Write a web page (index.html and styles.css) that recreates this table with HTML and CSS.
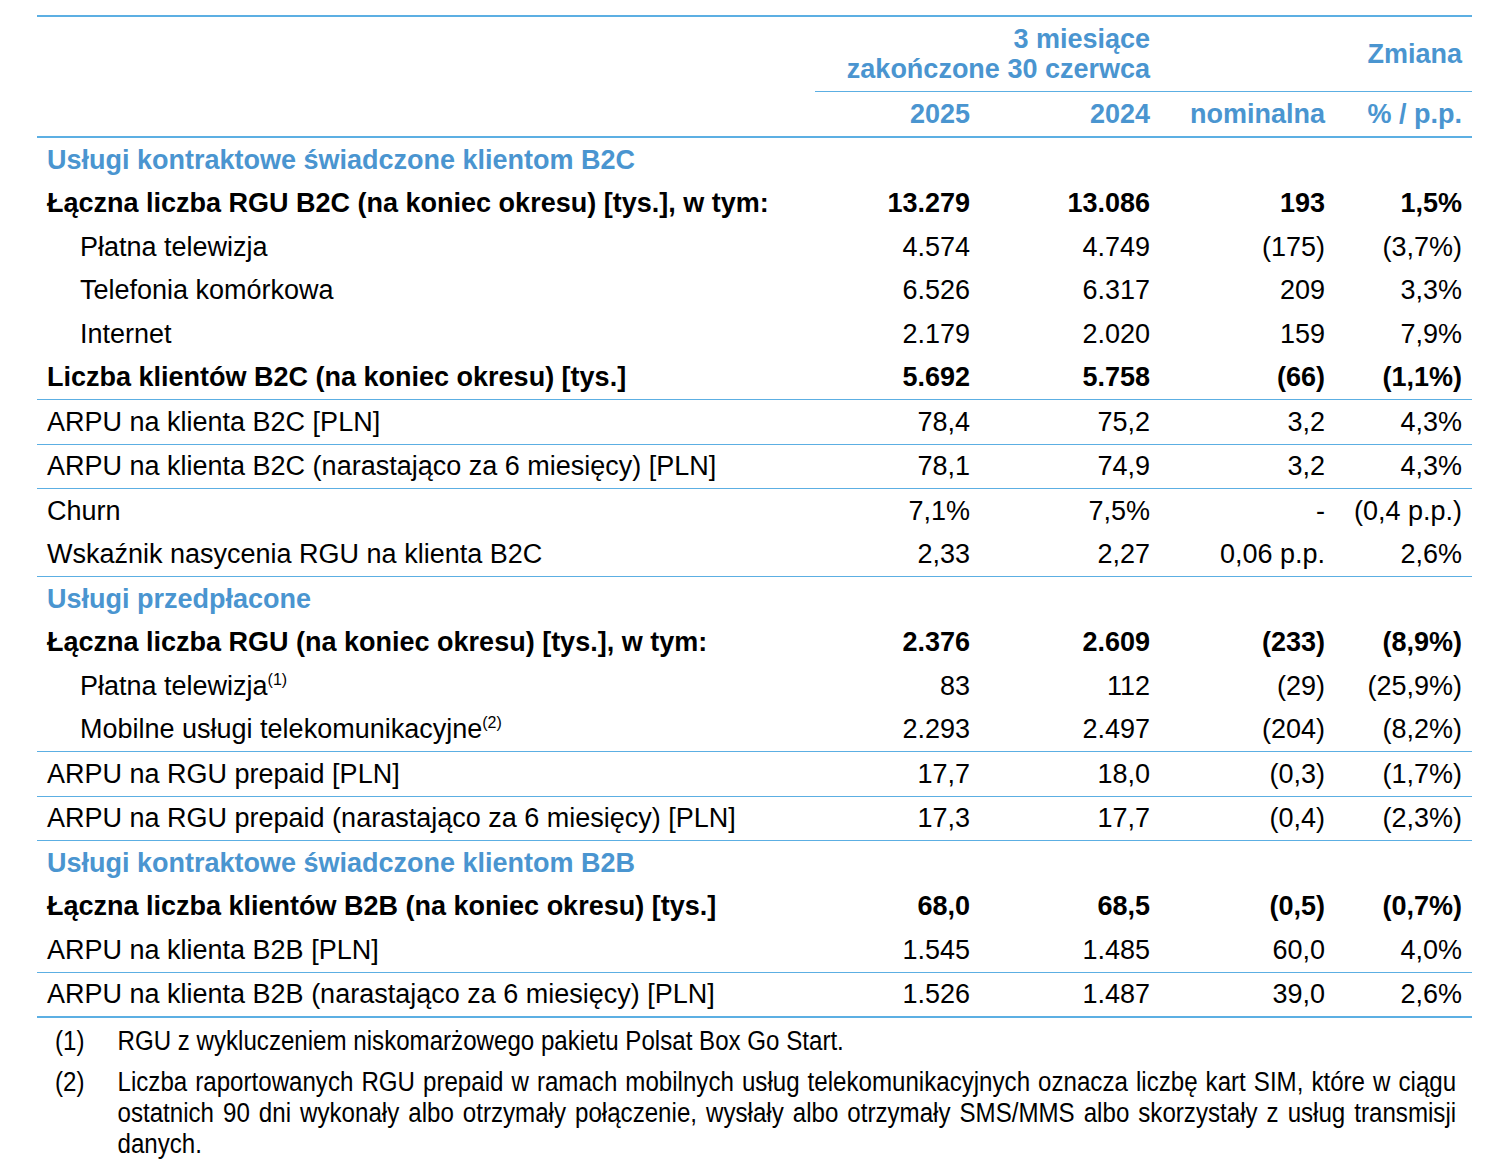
FILE: index.html
```html
<!DOCTYPE html>
<html lang="pl">
<head>
<meta charset="utf-8">
<title>KPI</title>
<link rel="stylesheet" href="styles.css">
</head>
<body>
<div class="page">
<table class="kpi">
  <colgroup>
    <col class="c-label"><col class="c-y1"><col class="c-y2"><col class="c-nom"><col class="c-pct">
  </colgroup>
  <thead>
    <tr class="h1">
      <th class="lbl" rowspan="2"></th>
      <th class="hd span" colspan="2">3 miesiące<br>zakończone 30 czerwca</th>
      <th class="hd"></th>
      <th class="hd">Zmiana</th>
    </tr>
    <tr class="h2">
      <th class="hd">2025</th>
      <th class="hd">2024</th>
      <th class="hd">nominalna</th>
      <th class="hd">% / p.p.</th>
    </tr>
  </thead>
  <tbody>
    <tr class="sec"><td colspan="5">Usługi kontraktowe świadczone klientom B2C</td></tr>
    <tr class="b"><td>Łączna liczba RGU B2C (na koniec okresu) [tys.], w tym:</td><td>13.279</td><td>13.086</td><td>193</td><td>1,5%</td></tr>
    <tr class="ind"><td>Płatna telewizja</td><td>4.574</td><td>4.749</td><td>(175)</td><td>(3,7%)</td></tr>
    <tr class="ind"><td>Telefonia komórkowa</td><td>6.526</td><td>6.317</td><td>209</td><td>3,3%</td></tr>
    <tr class="ind"><td>Internet</td><td>2.179</td><td>2.020</td><td>159</td><td>7,9%</td></tr>
    <tr class="b"><td>Liczba klientów B2C (na koniec okresu) [tys.]</td><td>5.692</td><td>5.758</td><td>(66)</td><td>(1,1%)</td></tr>
    <tr class="ln"><td>ARPU na klienta B2C [PLN]</td><td>78,4</td><td>75,2</td><td>3,2</td><td>4,3%</td></tr>
    <tr class="ln"><td>ARPU na klienta B2C (narastająco za 6 miesięcy) [PLN]</td><td>78,1</td><td>74,9</td><td>3,2</td><td>4,3%</td></tr>
    <tr class="ln"><td>Churn</td><td>7,1%</td><td>7,5%</td><td>-</td><td>(0,4 p.p.)</td></tr>
    <tr><td>Wskaźnik nasycenia RGU na klienta B2C</td><td>2,33</td><td>2,27</td><td>0,06 p.p.</td><td>2,6%</td></tr>
    <tr class="sec ln"><td colspan="5">Usługi przedpłacone</td></tr>
    <tr class="b"><td>Łączna liczba RGU (na koniec okresu) [tys.], w tym:</td><td>2.376</td><td>2.609</td><td>(233)</td><td>(8,9%)</td></tr>
    <tr class="ind"><td>Płatna telewizja<sup>(1)</sup></td><td>83</td><td>112</td><td>(29)</td><td>(25,9%)</td></tr>
    <tr class="ind"><td>Mobilne usługi telekomunikacyjne<sup>(2)</sup></td><td>2.293</td><td>2.497</td><td>(204)</td><td>(8,2%)</td></tr>
    <tr class="ln"><td>ARPU na RGU prepaid&nbsp;[PLN]</td><td>17,7</td><td>18,0</td><td>(0,3)</td><td>(1,7%)</td></tr>
    <tr class="ln"><td>ARPU na RGU prepaid (narastająco za 6 miesięcy) [PLN]</td><td>17,3</td><td>17,7</td><td>(0,4)</td><td>(2,3%)</td></tr>
    <tr class="sec ln"><td colspan="5">Usługi kontraktowe świadczone klientom B2B</td></tr>
    <tr class="b"><td>Łączna liczba klientów B2B (na koniec okresu) [tys.]</td><td>68,0</td><td>68,5</td><td>(0,5)</td><td>(0,7%)</td></tr>
    <tr><td>ARPU na klienta B2B [PLN]</td><td>1.545</td><td>1.485</td><td>60,0</td><td>4,0%</td></tr>
    <tr class="ln last"><td>ARPU na klienta B2B (narastająco za 6 miesięcy) [PLN]</td><td>1.526</td><td>1.487</td><td>39,0</td><td>2,6%</td></tr>
  </tbody>
</table>
<div class="notes-wrap">
  <div class="notes">
    <div class="note"><span class="num">(1)</span><p>RGU z wykluczeniem niskomarżowego pakietu Polsat Box Go Start.</p></div>
    <div class="note"><span class="num">(2)</span><p>Liczba raportowanych RGU prepaid w ramach mobilnych usług telekomunikacyjnych oznacza liczbę kart SIM, które w ciągu ostatnich 90 dni wykonały albo otrzymały połączenie, wysłały albo otrzymały SMS/MMS albo skorzystały z usług transmisji danych.</p></div>
  </div>
</div>
</div>
</body>
</html>
```

FILE: styles.css
```css
html, body {
  margin: 0;
  padding: 0;
  background: #ffffff;
}
.page {
  padding: 15px 34px 0 37px;
  font-family: "Liberation Sans", Arial, sans-serif;
  color: #000;
  overflow: hidden;
}
.kpi {
  width: 1435px;
  border-collapse: collapse;
  table-layout: fixed;
  font-size: 27px;
  border-top: 2px solid #5cafe3;
}
.c-label { width: 778px; }
.c-y1 { width: 165px; }
.c-y2 { width: 180px; }
.c-nom { width: 175px; }
.c-pct { width: 137px; }

.kpi th {
  font-weight: bold;
  color: #4a95d0;
  text-align: right;
  padding: 0 10px;
  font-size: 27px;
  line-height: 30px;
  vertical-align: middle;
}
.kpi .h1 th { height: 74px; }
.kpi .h1 th.hd { border-bottom: 1px solid #5cafe3; }
.kpi .h2 th { height: 44px; border-bottom: 2px solid #5cafe3; }
.kpi th.lbl { border-bottom: 2px solid #5cafe3; }

.kpi td {
  height: 43.5px;
  padding: 0 10px;
  text-align: right;
  vertical-align: middle;
  line-height: 30px;
  white-space: nowrap;
}
.kpi td:first-child { text-align: left; }
.kpi tr.ind td:first-child { padding-left: 43px; }
.kpi tr.b td { font-weight: bold; }
.kpi tr.sec td {
  font-weight: bold;
  color: #4a95d0;
  text-align: left;
}
.kpi tr.ln td { border-top: 1px solid #5cafe3; }
.kpi tr.last td { border-bottom: 2px solid #5cafe3; }
.kpi sup {
  font-size: 16px;
  line-height: 0;
  vertical-align: 10px;
}

.notes-wrap {
  padding: 8px 0 0 18px;
}
.notes {
  width: 1569px;
  font-size: 27px;
  line-height: 31px;
  transform: scaleX(0.893);
  transform-origin: left top;
}
.note {
  display: flex;
  margin-bottom: 10px;
}
.note .num {
  flex: 0 0 70px;
}
.note p {
  margin: 0;
  flex: 1;
  text-align: justify;
}
```
